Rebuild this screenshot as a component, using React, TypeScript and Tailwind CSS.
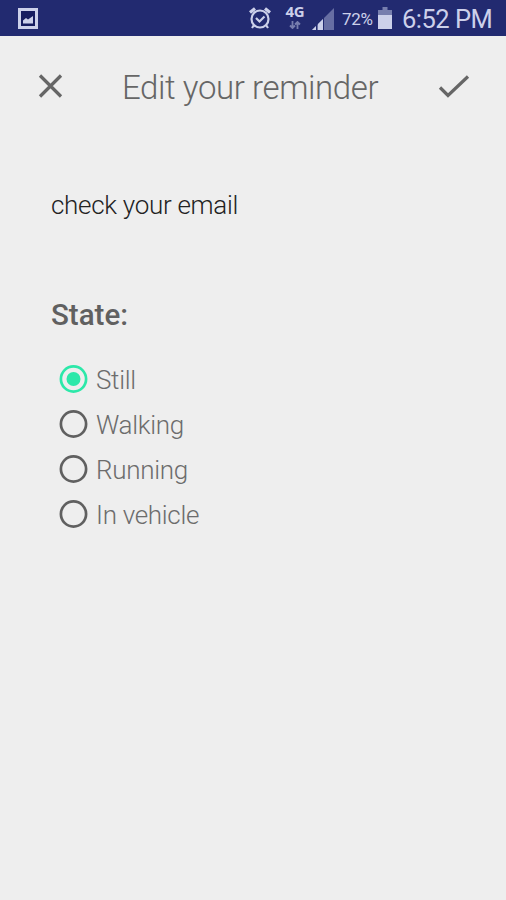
import { useState } from "react";

const states = ["Still", "Walking", "Running", "In vehicle"];

const StatusBar = () => {
  return (
    <div className="flex items-center h-9 pl-[18px] pr-3 bg-[#222a70] text-[#ccd0ea]">
      <svg width="20" height="21" viewBox="0 0 20 21">
        <rect x="1.500" y="1.500" width="17" height="18" fill="#161c60" stroke="currentColor" strokeWidth="3" />
        <path d="M5 15.500v-3l3-2.500 2 1.500 5-3.500v7.500z" fill="currentColor" />
      </svg>

      <svg className="ml-auto" width="22" height="24" viewBox="0 0 22 24" fill="none" stroke="currentColor">
        <circle cx="11" cy="13" r="8.500" strokeWidth="2.200" />
        <path d="M1 6.500 6 2.500M21 6.500 16 2.500" strokeWidth="3.200" />
        <path d="m7 12 3.500 3.500 5-5M5 19l-2 3M17 19l2 3" strokeWidth="2.200" />
      </svg>

      <div className="flex flex-col items-center w-6 h-8 ml-3">
        <span className="font-['Noto_Sans',sans-serif] text-[15px] leading-[19px] font-bold tracking-[-0.300px]">4G</span>
        <svg width="12" height="8" viewBox="0 0 12 8" fill="none" stroke="#777eae" strokeWidth="1.800">
          <path d="M3.500 0v7M1 4.500 3.500 7 6 4.500M8.500 8V1M6 3.500 8.500 1 11 3.500" />
        </svg>
      </div>

      <svg className="ml-[5px]" width="23" height="23" viewBox="0 0 23 23">
        <path d="M0 23 22 1v22z" fill="#676ea3" />
        <path d="M0 23l4-4v4zM6 23v-6l1-1v7zM7 23v-7l4-4v11z" fill="currentColor" />
        <path d="M4.500 23v-5M11.500 23V11" stroke="#222a70" strokeWidth="1" />
      </svg>

      <span className="w-8 ml-[7px] pt-[2px] text-[17px] leading-6 tracking-[-0.300px] whitespace-nowrap">72%</span>

      <svg className="ml-1" width="14" height="22" viewBox="0 0 14 22">
        <path d="M4.500 0h5v3H14v5H0V3h4.500z" fill="#777eae" />
        <path d="M0 8h14v14H0z" fill="currentColor" />
      </svg>

      <span className="w-[92px] ml-[10px] pt-[3px] text-[25.500px] leading-[33px] tracking-[-0.500px] whitespace-nowrap">
        6:52 PM
      </span>
    </div>
  );
};

const StateOption = ({
  label,
  checked,
  onSelect,
}: {
  label: string;
  checked: boolean;
  onSelect: () => void;
}) => {
  return (
    <li>
      <button
        role="radio"
        aria-checked={checked}
        onClick={onSelect}
        className="flex items-center h-[45px] cursor-pointer"
      >
        <svg
          className={checked ? "text-[#2ce8a9]" : "text-[#606060]"}
          width="29"
          height="28"
          viewBox="0 0 29 28"
        >
          <circle cx="14.500" cy="14" r="12.600" fill="none" stroke="currentColor" strokeWidth="2.700" />
          {checked && <circle cx="14.500" cy="14" r="7" fill="currentColor" />}
        </svg>
        <span className="ml-2 pt-[3px] text-[26px] leading-8 font-light tracking-[-0.300px] text-[#6c6c6c]">
          {label}
        </span>
      </button>
    </li>
  );
};

const App = () => {
  const [selected, setSelected] = useState("Still");

  return (
    <div className="w-full h-screen overflow-hidden bg-[#eeeeee] font-[Roboto,sans-serif]">
      <StatusBar />

      <header className="flex items-center h-[101px] pl-[38px] pr-[36px] text-[#666666]">
        <button aria-label="Close" className="cursor-pointer">
          <svg width="25" height="25" viewBox="0 0 25 25" fill="none" stroke="currentColor" strokeWidth="3.200">
            <path d="M2 1.500l21 21M23 1.500 2 22.500" />
          </svg>
        </button>
        <h1 className="ml-[59px] pt-[3px] text-[33px] leading-10 font-light tracking-[-0.400px] whitespace-nowrap">
          Edit your reminder
        </h1>
        <button aria-label="Save" className="ml-auto cursor-pointer">
          <svg width="32" height="24" viewBox="0 0 32 24" fill="none" stroke="currentColor" strokeWidth="3.200">
            <path d="M2 12.500l8 8L30 1.500" />
          </svg>
        </button>
      </header>

      <main className="px-[51px] pt-[52px]">
        <p className="text-[26px] leading-8 font-light tracking-[-0.300px] text-[#222222]">check your email</p>

        <h2 className="mt-[76px] text-[29.500px] leading-9 font-medium text-[#606060]">State:</h2>

        <ul role="radiogroup" className="mt-[23px] pl-2">
          {states.map((state) => (
            <StateOption
              key={state}
              label={state}
              checked={selected === state}
              onSelect={() => setSelected(state)}
            />
          ))}
        </ul>
      </main>
    </div>
  );
};

export default App;
